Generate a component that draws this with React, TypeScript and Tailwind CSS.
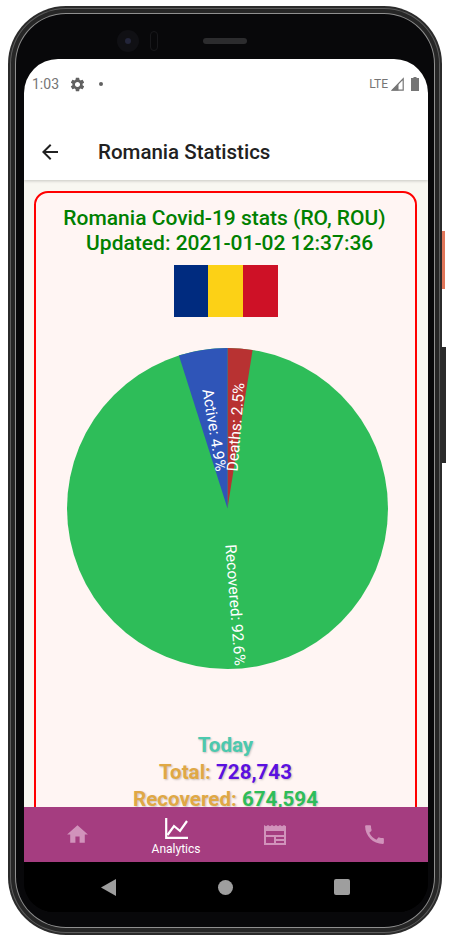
import React from "react";
import { MdHome, MdCall, MdArrowBack, MdSettings } from "react-icons/md";

function Signal() {
  return (
    <svg width="13" height="14" viewBox="0 0 13 14">
      <path d="M12.2 1.8V13.2H1.2Z" fill="none" stroke="#757575" strokeWidth="1.2" />
      <path d="M7.5 7V13.5H0.5L7.5 7Z" fill="#757575" />
    </svg>
  );
}

function Battery() {
  return (
    <svg width="8" height="14" viewBox="0 0 8 14">
      <path d="M2.5 0H5.5V1H8V14H0V1H2.5Z" fill="#757575" />
    </svg>
  );
}

function AnalyticsIcon() {
  return (
    <svg width="23" height="21" viewBox="0 0 23 21" fill="none" stroke="#ffffff" strokeWidth="2.2">
      <path d="M1.2 0V19.9H23" />
      <path d="M2.5 17L9 8L15 13L22 3" />
    </svg>
  );
}

function NewsIcon() {
  return (
    <svg width="24" height="24" viewBox="0 0 24 24">
      <path
        fillRule="evenodd"
        fill="#d193bb"
        d="M1 2L3 3.2L5 2L7 3.2L9 2L11 3.2L13 2L15 3.2L17 2L19 3.2L21 2L23 3.2V22H1ZM3 8V12H21V8ZM3 14V20H11V14ZM13 14V16H21V14ZM13 18V20H21V18Z"
      />
    </svg>
  );
}

function Pie() {
  return (
    <svg width="321" height="321" viewBox="0 0 321 321" className="block">
      <circle cx="160.5" cy="160.5" r="160.5" fill="#2ebd59" />
      <path d="M160.5 160.5L160.5 0A160.5 160.5 0 0 1 185.6 2Z" fill="#b83232" />
      <path d="M160.5 160.5L111.9 7.5A160.5 160.5 0 0 1 160.5 0Z" fill="#2f55b8" />
      <g fill="#ffffff" fontSize="15.5" textAnchor="middle" dominantBaseline="central">
        <text transform="translate(169 79) rotate(-85.5)">Deaths: 2.5%</text>
        <text transform="translate(147 82) rotate(80.5)">Active: 4.9%</text>
        <text transform="translate(168 257) rotate(85.5)">Recovered: 92.6%</text>
      </g>
    </svg>
  );
}

function StatLine({ label, value, color }: { label: string; value: string; color: string }) {
  return (
    <div className="h-[27px] leading-[27px] text-[20.6px] font-bold text-center [text-shadow:1px_1px_2px_rgba(0,0,0,0.22)]">
      <span className="text-[#e0a845]">{label}: </span>
      <span className={color}>{value}</span>
    </div>
  );
}

export default function App() {
  return (
    <div className="relative w-[449px] h-[941px] bg-white overflow-hidden pl-2 pt-[6px] [font-family:Roboto,sans-serif]">
      <div className="absolute left-[442px] top-[231px] w-[3px] h-[58px] bg-[#e0765a]" />
      <div className="absolute left-[442px] top-[347px] w-[4px] h-[116px] bg-[#2a2a2a]" />
      <div className="w-[434px] h-[929px] rounded-[58px] bg-[#2b2b2b] p-[2px]">
        <div className="w-full h-full rounded-[56px] bg-[#5c5c5c] p-[1px]">
          <div className="w-full h-full rounded-[55px] bg-[#262626] p-[4px]">
            <div className="w-full h-full rounded-[51px] bg-[#8f8f8f] p-[1px]">
              <div className="w-full h-full rounded-[50px] bg-[#08080a] flex flex-col items-start pl-[8px]">
                <div className="h-[45px] w-[404px] flex items-center pl-[93px] pt-[8px] shrink-0">
                  <div className="w-[22px] h-[22px] rounded-full bg-[#101014] flex items-center justify-center">
                    <div className="w-[6px] h-[6px] rounded-full bg-[#23253a]" />
                  </div>
                  <div className="ml-[11px] w-[8px] h-[20px] rounded-full border border-[#18181b]" />
                  <div className="ml-[45px] w-[44px] h-[6px] rounded-full bg-[#2c2c2e]" />
                </div>
                <div className="w-[404px] h-[853px] shrink-0 rounded-t-[34px] rounded-b-[30px] overflow-hidden bg-black flex flex-col">
                  <div className="relative z-20 h-[65px] shrink-0 bg-white flex items-start justify-between pt-[14px] pl-[8px] pr-[9px] text-[#757575]">
                    <div className="flex items-center h-[22px]">
                      <span className="text-[14px] w-[27px]">1:03</span>
                      <MdSettings className="ml-[10px]" size={17} color="#616161" />
                      <span className="ml-[13px] w-[4px] h-[4px] rounded-full bg-[#616161]" />
                    </div>
                    <div className="flex items-center h-[22px]">
                      <span className="text-[12px]">LTE</span>
                      <span className="ml-[3px]"><Signal /></span>
                      <span className="ml-[7px]"><Battery /></span>
                    </div>
                  </div>
                  <div className="h-[56px] shrink-0 bg-white flex items-center pl-[14px] z-10 shadow-[0_1px_3px_rgba(0,0,0,0.2)]">
                    <MdArrowBack size={24} color="#212121" />
                    <span className="ml-[36px] text-[20.5px] font-medium text-[#212121]">Romania Statistics</span>
                  </div>
                  <div className="h-[627px] shrink-0 overflow-hidden bg-[#f8f7f1] pl-[10px] pr-[11px] pt-[11px]">
                    <div className="h-[700px] rounded-[14px] border-2 border-[#ff0000] bg-[#fff5f3] pt-[13px]">
                      <div className="text-center text-[21px] leading-[25px] font-medium text-[#008000] -translate-x-[1px]">
                        <div>Romania Covid-19 stats (RO, ROU)</div>
                        <div>&nbsp;&nbsp;Updated: 2021-01-02 12:37:36</div>
                      </div>
                      <div className="mt-[9px] mx-auto flex w-[104px] h-[52px]">
                        <div className="flex-1 bg-[#002b7f]" />
                        <div className="flex-1 bg-[#fcd116]" />
                        <div className="flex-1 bg-[#ce1126]" />
                      </div>
                      <div className="mt-[31px] flex justify-center pl-[4px]">
                        <Pie />
                      </div>
                      <div className="mt-[63px]">
                        <div className="h-[27px] leading-[27px] text-[20.6px] font-bold text-center text-[#4cc9ae] [text-shadow:1px_1px_2px_rgba(0,0,0,0.22)]">Today</div>
                        <StatLine label="Total" value="728,743" color="text-[#5b10e0]" />
                        <StatLine label="Recovered" value="674,594" color="text-[#2ebd59]" />
                      </div>
                    </div>
                  </div>
                  <div className="h-[55px] shrink-0 bg-[#a53d80] flex z-10">
                    <div className="w-[106px] flex items-center justify-center">
                      <MdHome size={25} color="#d193bb" />
                    </div>
                    <div className="w-[92px] flex flex-col items-center pt-[11px] gap-[2px]">
                      <AnalyticsIcon />
                      <span className="text-[12px] leading-[16px] text-white">Analytics</span>
                    </div>
                    <div className="w-[106px] flex items-center justify-center">
                      <NewsIcon />
                    </div>
                    <div className="w-[92px] flex items-center justify-center">
                      <MdCall size={25} color="#d193bb" />
                    </div>
                  </div>
                  <div className="flex-1 bg-black flex items-center pl-[77px]">
                    <svg width="15" height="17" viewBox="0 0 15 17">
                      <path d="M15 0V17L0 8.5Z" fill="#9e9e9e" />
                    </svg>
                    <div className="ml-[102px] w-[15px] h-[15px] rounded-full bg-[#9e9e9e]" />
                    <div className="ml-[101px] w-[16px] h-[16px] rounded-[2px] bg-[#9e9e9e]" />
                  </div>
                </div>
              </div>
            </div>
          </div>
        </div>
      </div>
    </div>
  );
}
